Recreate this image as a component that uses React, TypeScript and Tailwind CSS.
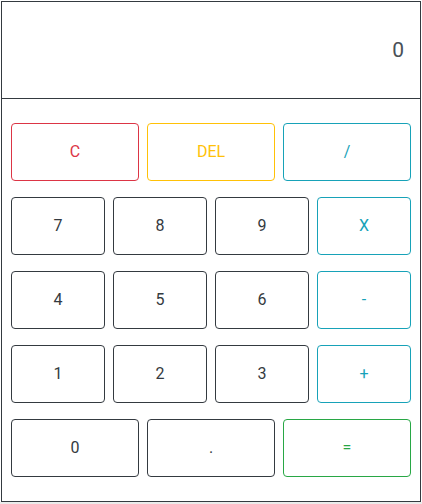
const rows: { label: string; tone: string }[][] = [
  [
    { label: 'C', tone: 'danger' },
    { label: 'DEL', tone: 'warning' },
    { label: '/', tone: 'info' },
  ],
  [
    { label: '7', tone: 'dark' },
    { label: '8', tone: 'dark' },
    { label: '9', tone: 'dark' },
    { label: 'X', tone: 'info' },
  ],
  [
    { label: '4', tone: 'dark' },
    { label: '5', tone: 'dark' },
    { label: '6', tone: 'dark' },
    { label: '-', tone: 'info' },
  ],
  [
    { label: '1', tone: 'dark' },
    { label: '2', tone: 'dark' },
    { label: '3', tone: 'dark' },
    { label: '+', tone: 'info' },
  ],
  [
    { label: '0', tone: 'dark' },
    { label: '.', tone: 'dark' },
    { label: '=', tone: 'success' },
  ],
]

const tones: Record<string, string> = {
  danger: 'border-[#dc3545] text-[#dc3545]',
  warning: 'border-[#ffc107] text-[#ffc107]',
  info: 'border-[#17a2b8] text-[#17a2b8]',
  success: 'border-[#28a745] text-[#28a745]',
  dark: 'border-[#343a40] text-[#343a40]',
}

export default function App() {
  return (
    <div
      className="w-[422px] h-[504px] bg-white overflow-hidden flex flex-col"
      style={{ fontFamily: 'Roboto, "Liberation Sans", sans-serif' }}
    >
      <div className="mt-px ml-px w-[420px] h-[501px] border border-[#343a40] bg-white flex flex-col">
        {/* Display */}
        <div className="h-[97px] border-b border-[#343a40] flex items-center justify-end pr-4 pt-[1px]">
          <span className="text-[21px] text-[#495057]">0</span>
        </div>

        {/* Keypad */}
        <div className="flex flex-col gap-4 px-[9px] pt-6">
          {rows.map((row, i) => (
            <div key={i} className="flex gap-2">
              {row.map((b) => (
                <button
                  key={b.label}
                  className={`flex-1 h-[58px] rounded border bg-white text-base flex items-center justify-center ${tones[b.tone]}`}
                >
                  {b.label}
                </button>
              ))}
            </div>
          ))}
        </div>
      </div>
      <div className="flex-1 bg-[#ebebeb]" />
    </div>
  )
}
